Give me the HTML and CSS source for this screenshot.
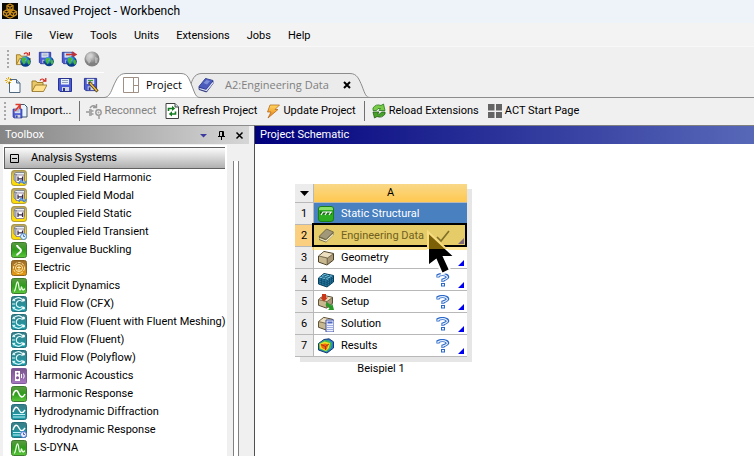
FILE: index.html
```html
<!DOCTYPE html>
<html lang="en">
<head>
<meta charset="utf-8">
<title>Unsaved Project - Workbench</title>
<link rel="stylesheet" href="styles.css">
</head>
<body>
<svg class="defs" aria-hidden="true">
  <defs>
    <linearGradient id="gy" x2="0" y2="1"><stop offset="0" stop-color="#a89a78"/><stop offset=".4" stop-color="#f2cf2c"/><stop offset="1" stop-color="#ffe000"/></linearGradient>
    <linearGradient id="gg" x2="0" y2="1"><stop offset="0" stop-color="#5c9a44"/><stop offset=".5" stop-color="#2f9c1c"/><stop offset="1" stop-color="#5cc83c"/></linearGradient>
    <linearGradient id="go" x2="0" y2="1"><stop offset="0" stop-color="#9a6c2c"/><stop offset="1" stop-color="#e89c10"/></linearGradient>
    <linearGradient id="gt" x2="0" y2="1"><stop offset="0" stop-color="#3c7c84"/><stop offset="1" stop-color="#18a0ac"/></linearGradient>
    <linearGradient id="gp" x2="0" y2="1"><stop offset="0" stop-color="#77558c"/><stop offset="1" stop-color="#a878c0"/></linearGradient>
    <radialGradient id="globe" cx=".4" cy=".3"><stop offset="0" stop-color="#a8e4ff"/><stop offset=".5" stop-color="#2c8cd8"/><stop offset="1" stop-color="#083c88"/></radialGradient>
    <radialGradient id="ball" cx=".4" cy=".3"><stop offset="0" stop-color="#e0e0e0"/><stop offset="1" stop-color="#808080"/></radialGradient>
    <linearGradient id="bolt" x2="0" y2="1"><stop offset="0" stop-color="#ffd860"/><stop offset="1" stop-color="#e87810"/></linearGradient>
    <linearGradient id="ptr" gradientUnits="userSpaceOnUse" x1="0" y1="0" x2="0" y2="46"><stop offset=".42" stop-color="#7c6008"/><stop offset=".42" stop-color="#000"/></linearGradient>
    <linearGradient id="ptredge" gradientUnits="userSpaceOnUse" x1="0" y1="0" x2="0" y2="46"><stop offset=".42" stop-color="#f8dc80"/><stop offset=".42" stop-color="#fff"/></linearGradient>

    <symbol id="i-logo" viewBox="0 0 16 16"><rect width="16" height="16" fill="#0c0a04"/><g fill="none" stroke="#c88c1c" stroke-width="1.3"><path d="M8 1l3 1.6v3L8 7.400 5 5.600v-3zM4.500 7l3 1.600v3L4.500 13.400l-3-1.800v-3zM11.500 7l3 1.600v3l-3 1.800-3-1.800v-3z"/><path d="M5 2.600l3 1.600 3-1.600M1.500 8.600l3 1.600 3-1.600M8.500 8.600l3 1.600 3-1.600M8 4.200V7M4.500 10v3M11.500 10v3M5 14l3 1 3-1"/></g></symbol>
    <symbol id="b-folder" viewBox="0 0 16 16"><path d="M1 14V4h4l1 1.500h6V8" fill="#e8c868" stroke="#a07c28"/><path d="M1 14.500L4.500 8h11.500l-3.500 6.500z" fill="#ffe08c" stroke="#8c6c20" stroke-width=".8"/><path d="M9 3.500c1-2 3.500-2 4.500 0M14.800 1v3.200h-3" fill="none" stroke="#d02018" stroke-width="1.2"/></symbol>
    <symbol id="b-disk" viewBox="0 0 16 16"><path d="M1.500 1.500h13v13H3l-1.500-1.500z" fill="#4c5cd4" stroke="#283490"/><path d="M4 2h8v5.500H4z" fill="#e8f0f8"/><path d="M5 3.500h6M5 5.500h6" stroke="#90a0b8"/><path d="M5 10h7v4H5z" fill="#d0d4dc"/><path d="M6 11h2v3H6z" fill="#283490"/></symbol>
    <symbol id="b-globe" viewBox="0 0 10 10"><circle cx="5" cy="5" r="4.800" fill="url(#globe)"/><path d="M1.500 2.500Q3 1 5 1.500L6 3 4.500 4 5 6 3.500 8 2 5zM7 3l2 1v3L7.500 8 6.500 5.500z" fill="#48b838"/></symbol>
    <symbol id="i-openweb" viewBox="0 0 16 16"><use href="#b-folder" width="16" height="15"/><use href="#b-globe" x="5" y="5" width="11" height="11"/></symbol>
    <symbol id="i-saveweb" viewBox="0 0 16 16"><use href="#b-disk" width="14" height="14"/><use href="#b-globe" x="6" y="5" width="10" height="11"/></symbol>
    <symbol id="i-sendweb" viewBox="0 0 16 16"><use href="#b-disk" width="14" height="14"/><path d="M5 3.500h9M11 1l4 2.500L11 6" stroke="#c83030" fill="none" stroke-width="1.400"/><use href="#b-globe" x="5" y="5" width="11" height="11"/></symbol>
    <symbol id="i-ball" viewBox="0 0 16 16"><circle cx="8" cy="8" r="7.500" fill="url(#ball)"/><path d="M3 4l4-2 2 2-3 3 1 3-2 3-3-5zM11 6l3 1-1 5-2 0z" fill="#d0d0d0" opacity=".6"/></symbol>
    <symbol id="i-new" viewBox="0 0 16 16"><path d="M4.500 2.500h7l3.500 3.500v9.500H4.500z" fill="#f8fcff" stroke="#506880"/><path d="M11.500 2.500V6H15" fill="#b8d0e8" stroke="#506880"/><path d="M3.500 0v7M0 3.500h7M1 1l5 5M6 1L1 6" stroke="#e8a800" stroke-width="1"/><circle cx="3.500" cy="3.500" r="1.300" fill="#fff"/></symbol>
    <symbol id="i-saveas" viewBox="0 0 16 16"><use href="#b-disk" width="15" height="15"/><path d="M6 5l8.500 9.500" stroke="#503c18" stroke-width="3"/><path d="M7 6l7 8" stroke="#f0c048" stroke-width="1.500"/><path d="M5 3.500h5" stroke="#38a038"/></symbol>
    <symbol id="i-import" viewBox="0 0 16 16"><path d="M8 1.500h4.500L15 4v10H8z" fill="#e8f4ff" stroke="#40586c"/><use href="#b-disk" y="5" width="11" height="11"/><path d="M3.500 1.500H8V6M3 8l5-6" stroke="#e03828" stroke-width="1.600" fill="none"/></symbol>
    <symbol id="i-reconnect" viewBox="0 0 16 16"><g fill="none" stroke="#989898" stroke-width="1.400"><path d="M4 5q3-4 6-1M10.500 1v3.500H7M0 9h3M3 7h2v5H3M5 8h2.500M5 11h2.500M13 13v3"/><circle cx="12.500" cy="9.500" r="2.700"/></g><path d="M3 6.500h2.500v6H3z" fill="#a8a8a8"/><circle cx="12.500" cy="9.500" r="1" fill="#a8a8a8"/></symbol>
    <symbol id="i-refresh" viewBox="0 0 16 16"><path d="M2 .5h9L14.500 4v11.500H2z" fill="#fff" stroke="#404040"/><path d="M11 .5V4h3.500" fill="#d0e8e8" stroke="#404040"/><path d="M4.500 8V5.500H9M11.500 8.500V11H7" stroke="#147c20" stroke-width="1.600" fill="none"/><path d="M8 2.800l3.200 2.700L8 8zM8 8.300v5.200L4.800 11z" fill="#147c20"/></symbol>
    <symbol id="i-bolt" viewBox="0 0 16 16"><path d="M5 2h9.500L10 6.500h3L3 15l3-6H2.500z" fill="url(#bolt)" stroke="#b06010" stroke-width=".7"/></symbol>
    <symbol id="i-reload" viewBox="0 0 16 16"><path d="M2 7.500V5q3-4.500 8-2.500l2.500-1.500L14 7.500H8l1.500-2q-3-1-4 2z" fill="#78cc48" stroke="#287818" stroke-width=".8"/><path d="M14 9v2q-3 4.500-8 2.500l-2.500 1.500L2 9h6l-1.500 2q3 1 4-2z" fill="#48a428" stroke="#205c14" stroke-width=".8"/></symbol>
    <symbol id="i-act" viewBox="0 0 16 16"><path d="M1 1h6.500v6.500H1zM9 1h6v6.500H9zM1 9h6.500v6H1zM9 9h6v6H9z" fill="#646464"/></symbol>
    <symbol id="i-layout" viewBox="0 0 16 16"><path d="M.5.5h15v15H.5zM10.500.5v15M10.500 8.500h5" fill="#fff" stroke="#a09084"/></symbol>
    <symbol id="i-book" viewBox="0 0 16 16"><path d="M1 9.500L7.500 1.500 15 3.500v3L8.500 15 1 12.500z" fill="#303c98" stroke="#20286c" stroke-width=".8"/><path d="M1.500 11.500L8.500 13.500l6.500-8" stroke="#e0e4f4" stroke-width="1.200" fill="none"/><path d="M1 9.500L7.500 1.500 15 3.500 8 12z" fill="#4c5cbc"/><path d="M5.500 6l3-3 3.500 1-3 3.500z" fill="#8090d8"/></symbol>
    <symbol id="i-graybook" viewBox="0 0 16 16"><path d="M1 8.500L8.500 1 15.500 4V7L8 14.500 1 12z" fill="#706848"/><path d="M1.500 10.500L8 13l7-6.500" stroke="#f4ecc8" stroke-width="1.200" fill="none"/><path d="M1 8.500L8.500 1 15.500 4 8 11.500z" fill="#a09878" stroke="#6c6444" stroke-width=".8"/></symbol>

    <symbol id="b-coupled" viewBox="0 0 16 16"><rect x=".5" y=".5" width="15" height="15" rx="2.500" fill="url(#gy)" stroke="#a48c28" stroke-width=".8"/><path d="M3 4l2-1.500h8.500V10L12 12" fill="#e8eef4" stroke="#707888" stroke-width=".8"/><path d="M3 4.500h2.500V12L3 10z" fill="#b8c4d0" stroke="#687080" stroke-width=".7"/><path d="M5 5h8v7.500H5z" fill="#fff" stroke="#807088" stroke-width=".8"/><path d="M7 6.500v4.500M11.500 6.500v4.500M7 8.800h4.500" stroke="#382c48" stroke-width="1.200"/></symbol>
    <symbol id="i-charm" viewBox="0 0 16 16"><use href="#b-coupled" width="16" height="16"/><path d="M8 14c1-4 2.500-4 4-1.500s2 0 3.500-1.500" stroke="#488ce0" stroke-width="1.500" fill="none"/></symbol>
    <symbol id="i-ctrans" viewBox="0 0 16 16"><use href="#b-coupled" width="16" height="16"/><circle cx="12.500" cy="12.500" r="3" fill="#e0f0ff" stroke="#488cd8"/><path d="M12.500 10.500v2H14" stroke="#2860b0" fill="none" stroke-width=".8"/></symbol>
    <symbol id="b-green" viewBox="0 0 16 16"><rect x=".5" y=".5" width="15" height="15" rx="2" fill="url(#gg)" stroke="#3c7c2c"/></symbol>
    <symbol id="i-eigen" viewBox="0 0 16 16"><use href="#b-green" width="16" height="16"/><path d="M6 3c0 3 4 3 4 5.500S6 11 6 13.500" stroke="#fff" stroke-width="2" fill="none"/></symbol>
    <symbol id="i-electric" viewBox="0 0 16 16"><rect x=".5" y=".5" width="15" height="15" rx="2" fill="url(#go)" stroke="#8c6420"/><g stroke="#ffe8a8" fill="none"><circle cx="8" cy="8" r="5.500" stroke-dasharray="3 1"/><circle cx="8" cy="8" r="3.500"/><path d="M6 7.500h4M8 5.500v4M6.500 10h3"/></g></symbol>
    <symbol id="i-explicit" viewBox="0 0 16 16"><use href="#b-green" width="16" height="16"/><path d="M3 13c2 0 2-9 3.500-9S7.500 12 9 12s1-3 1.500-3 .5 3 1.500 3 .500-1 2-1" stroke="#e8ffe0" stroke-width="1.300" fill="none"/></symbol>
    <symbol id="b-teal" viewBox="0 0 16 16"><rect x=".5" y=".5" width="15" height="15" rx="2" fill="url(#gt)" stroke="#24707c"/></symbol>
    <symbol id="i-fluid" viewBox="0 0 16 16"><use href="#b-teal" width="16" height="16"/><g fill="none" stroke="#d8f8fc" stroke-width="1.200"><path d="M11.500 5.800a3.500 3.500 0 1 0 0 4.400"/><path d="M1.500 5Q6 0 10 2.500l1.500 1M1.500 11Q6 16 10 13.500l1.500-1M1 8h3M2 3l2 2M2 13l2-2"/></g><circle cx="12.500" cy="4" r="1.500" fill="#fff"/><circle cx="12.500" cy="12" r="1.500" fill="#fff"/></symbol>
    <symbol id="i-acoustic" viewBox="0 0 16 16"><rect x=".5" y=".5" width="15" height="15" rx="1" fill="url(#gp)" stroke="#80589c"/><path d="M4 3h5v10H4z" fill="#fff"/><circle cx="6.500" cy="5.500" r="1" fill="#805098"/><circle cx="6.500" cy="9.800" r="1.500" fill="#805098"/><path d="M10.500 6v4M12.500 5.500q1.500 2.500 0 5" stroke="#fff" fill="none"/></symbol>
    <symbol id="i-harm" viewBox="0 0 16 16"><use href="#b-green" width="16" height="16"/><path d="M2 9.500C3 4 6 3 7.500 7s4 6 6.500 1" stroke="#fff" stroke-width="1.600" fill="none"/></symbol>
    <symbol id="i-hydro" viewBox="0 0 16 16"><use href="#b-teal" width="16" height="16"/><path d="M2 8C4 2 6 2 8 6s4 3 6 0" stroke="#fff" stroke-width="1.400" fill="none"/><path d="M2 10.500h12M2 13h12" stroke="#c0f0f8" stroke-width="1.200"/></symbol>
    <symbol id="i-hydror" viewBox="0 0 16 16"><use href="#i-hydro" width="16" height="16"/><circle cx="12.500" cy="12.500" r="3" fill="#e8f0ff" stroke="#5070d8"/><path d="M12.500 10.500v2H14" stroke="#2840b0" fill="none" stroke-width=".8"/></symbol>

    <symbol id="i-static" viewBox="0 0 16 16"><rect x=".5" y=".5" width="15" height="15" rx="2.500" fill="#2cac20" stroke="#1c7c18"/><path d="M1 3q0-2 2-2h10q2 0 2 2v1H1z" fill="#88e068"/><path d="M2 5.500h12v3H2z" fill="#186818"/><path d="M3 9l2-3h9M7 9l2-3M11 9l2-3" stroke="#fff" stroke-width="1.200" fill="none"/></symbol>
    <symbol id="i-geom" viewBox="0 0 16 16"><path d="M.5 6L6 1.500 15.500 3.500V10L9 15 .5 12z" fill="#a89878" stroke="#4c4028"/><path d="M1 6L6 2 15 4 9.500 8z" fill="#ece0c0"/><path d="M1 6.500L9 8.500V14.500L1 11.500z" fill="#c8b890"/><path d="M9.200 8v6.500M1 6l8.500 2L15 4" stroke="#64583c" stroke-width=".8" fill="none"/></symbol>
    <symbol id="i-model" viewBox="0 0 16 16"><path d="M.5 6L6 1.500 15.500 3.500V10L9 15 .5 12z" fill="#2878a0" stroke="#083c58"/><path d="M1 6L6 2 15 4 9.500 8z" fill="#80d0ec"/><path d="M1 8l8 2.500 6-4.500M1 10l8 2.500L15 8.500M3 4.500l8.500 2V13M4.800 3l8.700 2.200V12M3.500 6.500V13M6.200 7.200V14M3.500 6.500L9 2.500M6.500 7.200L12 3.200M9.200 8v6.500M1 6l8.500 2L15 4" stroke="#084868" stroke-width=".7" fill="none"/></symbol>
    <symbol id="i-setup" viewBox="0 0 16 16"><use href="#i-geom" width="15" height="15"/><path d="M4 0h4v3.500h2L6 7.500l-4-4h2z" fill="#c83818"/><path d="M9 8l4 3.500 1.500-1.500L16 16h-6l1.500-1.500L7.500 11z" fill="#289828"/></symbol>
    <symbol id="i-solution" viewBox="0 0 16 16"><use href="#i-geom" width="15" height="15"/><path d="M8 4h8v12H8z" fill="#eef2ff" stroke="#3c50a8"/><path d="M9.500 5.500h5v2h-5z" fill="#5068c0"/><path d="M9.500 9.500h5M9.500 11.500h5M9.500 13.500h5" stroke="#5068c0" stroke-dasharray="1 1"/></symbol>
    <symbol id="i-results" viewBox="0 0 16 16"><path d="M.5 5.500L6 1.500 11 .8l4.500 3V10L9 15 .5 12z" fill="#2878d8" stroke="#183c70"/><path d="M1 5.500L6.500 2 11 2.500l3 2.500-1 5-4.500 4L1 11z" fill="#38b858"/><path d="M1.500 6L6.500 3.500 12 5l-1 5L8 13l-6-2.500z" fill="#f0dc20"/><path d="M2.500 6.500L7 5.500l3.500 1-1.500 4-1 1.500-4-2z" fill="#f06810"/><path d="M3 6.500l4.500 2L11 6M7.500 8.500V12" stroke="#a02808" stroke-width=".8" fill="none"/></symbol>
    <symbol id="i-check" viewBox="0 0 14 14"><path d="M1 8l4 4 8-10" stroke="#807028" stroke-width="1.700" fill="none"/></symbol>
    <symbol id="i-question" viewBox="0 0 14 14"><path d="M2 4.500V2.500q5-2 8.500 0T7 7V9" stroke="#2c68c8" stroke-width="3.200" fill="none"/><path d="M2 4V2.700q5-2 8.300 0T7 7V8.500" stroke="#eaf4ff" stroke-width="1.200" fill="none"/><rect x="5.500" y="10.500" width="3" height="2.500" fill="#eaf4ff" stroke="#2c68c8"/></symbol>
  </defs>
</svg>

<div class="app">
  <header class="titlebar"><svg class="icon"><use href="#i-logo"/></svg><h1>Unsaved Project - Workbench</h1></header>
  <nav class="menubar">
    <button>File</button><button>View</button><button>Tools</button><button>Units</button><button>Extensions</button><button>Jobs</button><button>Help</button>
  </nav>
  <div class="toolbar repository">
    <span class="grip"></span>
    <button aria-label="Open from repository"><svg class="icon"><use href="#i-openweb"/></svg></button>
    <button aria-label="Save to repository"><svg class="icon"><use href="#i-saveweb"/></svg></button>
    <button aria-label="Send changes"><svg class="icon"><use href="#i-sendweb"/></svg></button>
    <button aria-label="Repository" disabled><svg class="icon"><use href="#i-ball"/></svg></button>
  </div>
  <div class="tabrow">
    <div class="files">
      <button aria-label="New"><svg class="icon"><use href="#i-new"/></svg></button>
      <button aria-label="Open"><svg class="icon"><use href="#b-folder"/></svg></button>
      <button aria-label="Save"><svg class="icon"><use href="#b-disk"/></svg></button>
      <button aria-label="Save as"><svg class="icon"><use href="#i-saveas"/></svg></button>
    </div>
    <div class="tabs">
      <div class="tab active">
        <svg class="shape" viewBox="0 0 96 26" preserveAspectRatio="none"><path d="M0 25.500C5 25.500 7 20 9 15C13 6 15 1.500 22 1.500H77C84 1.500 85 7 88 14C91 22 92 25.500 96 25.500"/></svg>
        <button class="label"><svg class="icon"><use href="#i-layout"/></svg>Project</button>
      </div>
      <div class="tab">
        <svg class="shape" viewBox="0 0 180 26" preserveAspectRatio="none"><path d="M1 12C3 5 6 1.500 12 1.500H160C167 1.500 169 7 172 14C175 22 176 25.500 180 25.500H8C5 25.500 4 20 1 12"/></svg>
        <button class="label"><svg class="icon"><use href="#i-book"/></svg>A2:Engineering Data</button>
        <button class="close" aria-label="Close tab"><svg viewBox="0 0 8 8"><path d="M1 1l6 6M7 1L1 7"/></svg></button>
      </div>
    </div>
  </div>
  <div class="toolbar commands">
    <span class="grip"></span>
    <button><svg class="icon"><use href="#i-import"/></svg>Import...</button>
    <span class="rule"></span>
    <button disabled><svg class="icon"><use href="#i-reconnect"/></svg>Reconnect</button>
    <button><svg class="icon"><use href="#i-refresh"/></svg>Refresh Project</button>
    <button><svg class="icon"><use href="#i-bolt"/></svg>Update Project</button>
    <span class="rule"></span>
    <button><svg class="icon"><use href="#i-reload"/></svg>Reload Extensions</button>
    <button><svg class="icon"><use href="#i-act"/></svg>ACT Start Page</button>
  </div>
  <main class="workspace">
    <aside class="toolbox">
      <div class="panelhead">
        <h2>Toolbox</h2>
        <button aria-label="Panel menu"><svg viewBox="0 0 9 9"><path d="M1 3h7L4.500 6.500z" fill="#3c3ca0"/></svg></button>
        <button aria-label="Pin panel"><svg viewBox="0 0 9 9"><path d="M2.500 5V.5h4V5M1 5.500h7M4.500 5.500V9M5.500 1v4" fill="none" stroke="#000"/></svg></button>
        <button aria-label="Close panel"><svg viewBox="0 0 9 9"><path d="M1.500 1.500l6 6M7.500 1.500l-6 6" stroke="#000" stroke-width="1.500"/></svg></button>
      </div>
      <div class="toolbody">
        <div class="tree">
          <button class="category"><svg viewBox="0 0 9 9"><path d="M.5.5h8v8h-8zM2 4.500h5" fill="none" stroke="#000"/></svg>Analysis Systems</button>
          <ul>
            <li><svg class="icon"><use href="#i-charm"/></svg>Coupled Field Harmonic</li>
            <li><svg class="icon"><use href="#i-charm"/></svg>Coupled Field Modal</li>
            <li><svg class="icon"><use href="#b-coupled"/></svg>Coupled Field Static</li>
            <li><svg class="icon"><use href="#i-ctrans"/></svg>Coupled Field Transient</li>
            <li><svg class="icon"><use href="#i-eigen"/></svg>Eigenvalue Buckling</li>
            <li><svg class="icon"><use href="#i-electric"/></svg>Electric</li>
            <li><svg class="icon"><use href="#i-explicit"/></svg>Explicit Dynamics</li>
            <li><svg class="icon"><use href="#i-fluid"/></svg>Fluid Flow (CFX)</li>
            <li><svg class="icon"><use href="#i-fluid"/></svg>Fluid Flow (Fluent with Fluent Meshing)</li>
            <li><svg class="icon"><use href="#i-fluid"/></svg>Fluid Flow (Fluent)</li>
            <li><svg class="icon"><use href="#i-fluid"/></svg>Fluid Flow (Polyflow)</li>
            <li><svg class="icon"><use href="#i-acoustic"/></svg>Harmonic Acoustics</li>
            <li><svg class="icon"><use href="#i-harm"/></svg>Harmonic Response</li>
            <li><svg class="icon"><use href="#i-hydro"/></svg>Hydrodynamic Diffraction</li>
            <li><svg class="icon"><use href="#i-hydror"/></svg>Hydrodynamic Response</li>
            <li><svg class="icon"><use href="#i-explicit"/></svg>LS-DYNA</li>
          </ul>
        </div>
        <div class="scroll"><span class="thumb"></span></div>
      </div>
    </aside>
    <section class="schematic">
      <h2>Project Schematic</h2>
      <div class="canvas">
        <figure class="system">
          <table>
            <thead><tr><th class="corner"><svg viewBox="0 0 9 5"><path d="M0 0h9L4.500 5z"/></svg></th><th class="colhead">A</th></tr></thead>
            <tbody>
              <tr class="title"><th>1</th><td><div class="cell"><svg class="icon"><use href="#i-static"/></svg>Static Structural</div></td></tr>
              <tr class="selected"><th>2</th><td><div class="cell"><svg class="icon"><use href="#i-graybook"/></svg>Engineering Data<svg class="state"><use href="#i-check"/></svg></div>
                <svg class="pointer" viewBox="0 0 30 46"><path d="M2 2V36L10 30L16 44L24 40L18 27H29Z"/></svg></td></tr>
              <tr><th>3</th><td><div class="cell"><svg class="icon"><use href="#i-geom"/></svg>Geometry</div></td></tr>
              <tr><th>4</th><td><div class="cell"><svg class="icon"><use href="#i-model"/></svg>Model<svg class="state"><use href="#i-question"/></svg></div></td></tr>
              <tr><th>5</th><td><div class="cell"><svg class="icon"><use href="#i-setup"/></svg>Setup<svg class="state"><use href="#i-question"/></svg></div></td></tr>
              <tr><th>6</th><td><div class="cell"><svg class="icon"><use href="#i-solution"/></svg>Solution<svg class="state"><use href="#i-question"/></svg></div></td></tr>
              <tr><th>7</th><td><div class="cell"><svg class="icon"><use href="#i-results"/></svg>Results<svg class="state"><use href="#i-question"/></svg></div></td></tr>
            </tbody>
          </table>
          <figcaption>Beispiel 1</figcaption>
        </figure>
      </div>
    </section>
  </main>
</div>
</body>
</html>
```

FILE: styles.css
```css
* { box-sizing: border-box; }
body {
  margin: 0;
  background: #f0f0f0;
  color: #000;
  font: 11px/18px Roboto, "Open Sans", sans-serif;
}
h1, h2, ul, figure { margin: 0; padding: 0; font-size: inherit; font-weight: normal; }
button {
  display: flex;
  align-items: center;
  margin: 0;
  padding: 0;
  border: 0;
  background: none;
  color: inherit;
  font: inherit;
  white-space: nowrap;
}
svg { display: block; flex: none; }
.defs { position: absolute; width: 0; height: 0; }
.icon { width: 16px; height: 16px; }

.app { display: flex; flex-direction: column; height: 100vh; overflow: hidden; }
.titlebar { display: flex; align-items: center; gap: 6px; padding: 1px 2px 2px; background: #edf3f9; }
.titlebar h1 { font-size: 12px; line-height: 20px; }
.menubar { display: flex; gap: 17px; padding: 4px 15px 1px; background: #f3f3f3; border-bottom: 1px solid #f8f8f8; }

.toolbar { display: flex; align-items: center; }
.grip {
  width: 2px;
  height: 18px;
  background: repeating-linear-gradient(#a8a8a8 0 2px, transparent 2px 4px);
}
.repository { gap: 7px; padding: 3px 7px; }
.repository .grip { margin-right: -1px; }

.tabrow { display: flex; padding-top: 1px; border-bottom: 1px solid #8c8c8c; font-family: "Open Sans", sans-serif; }
.files { display: flex; align-items: center; gap: 10px; padding: 0 5px; width: 104px; border-top: 1px solid #fff; }
.tabs { display: flex; }
.tab { position: relative; display: flex; align-items: center; height: 26px; margin-bottom: -1px; color: #808080; }
.tab .shape { position: absolute; left: 0; top: 0; width: 100%; height: 100%; fill: #ebebeb; stroke: #8c8c8c; }
.tab .label { position: relative; gap: 7px; }
.tab + .tab { width: 180px; margin-left: -10px; padding: 0 19px 0 8px; justify-content: space-between; }
.tab + .tab .label { gap: 11px; }
.tab.active { z-index: 1; width: 96px; padding-left: 19px; color: #000; }
.tab.active .shape { fill: #fff; }
.close { position: relative; }
.close svg { width: 8px; height: 8px; stroke: #000; stroke-width: 2px; }

.commands { gap: 8px; padding: 3px 4px 4px; }
.commands button { gap: 2px; }
.commands .grip { margin-right: -2px; }
.commands button:disabled { color: #808080; }
.rule { width: 1px; height: 20px; margin-right: -2px; background: #707070; }

.workspace { display: flex; flex: 1; min-height: 0; }
.toolbox { display: flex; flex-direction: column; flex: none; width: 255px; border-top: 1px solid #8c8c8c; border-right: 1px solid #505050; }
.panelhead {
  display: flex;
  align-items: center;
  gap: 9px;
  margin-right: 5px;
  padding: 0 5px;
  background: linear-gradient(90deg, #858585, #d6d6d6);
  color: #fff;
}
.panelhead h2 { flex: 1; }
.panelhead svg { width: 9px; height: 9px; }
.toolbody { display: flex; flex: 1; min-height: 0; padding: 1px 5px 0 3px; }
.tree { flex: 1; min-width: 0; padding: 2px 2px 0 1px; background: #fff; overflow: hidden; }
.category {
  width: 100%;
  gap: 12px;
  padding: 1px 5px;
  border: 1px solid #606060;
  border-width: 1px 0 1px 1px;
  background: linear-gradient(#fbfbfb, #b0b0b0);
}
.category svg { width: 9px; height: 9px; }
.tree ul { list-style: none; }
.tree li { display: flex; align-items: center; gap: 7px; padding-left: 7px; white-space: nowrap; }
.scroll { width: 22px; padding: 16px 0 0 6px; }
.thumb { display: block; width: 6px; height: 100%; border: 1px solid #808080; border-width: 0 1px; background: #fff; }

.schematic { display: flex; flex-direction: column; flex: 1; min-width: 0; background: #fff; border-top: 1px solid #808080; }
.schematic h2 { padding: 0 5px; background: linear-gradient(90deg, #00007c, #5868b8); color: #fff; }
.canvas { padding: 40px; }
.system { width: max-content; text-align: center; }
.system table { border-collapse: separate; border-spacing: 0; box-shadow: 5px 5px #e6e6e6; background: #fff; }
.system th { width: 19px; height: 22px; padding: 0; border: solid #b8b8b8; border-width: 0 1px 1px 0; background: #ececec; font-weight: normal; line-height: 16px; }
.system .corner { height: 19px; }
.corner svg { width: 9px; height: 5px; margin: 0 auto; }
.system .colhead { height: 19px; width: 153px; border-right: 0; background: linear-gradient(#f8d888, #ffc850); }
.system td { position: relative; height: 22px; padding: 0; border-bottom: 1px solid #b8b8b8; }
.cell { display: flex; align-items: center; gap: 7px; padding: 0 17px 0 4px; white-space: nowrap; }
.state { width: 14px; height: 14px; margin-left: auto; }
tr:not(.title) > td::after {
  content: "";
  position: absolute;
  right: 3px;
  bottom: 2px;
  border: 3px solid;
  border-color: transparent #0000f0 #0000f0 transparent;
}
.system .title td { background: #4880c0; color: #fff; }
.system .selected th { background: #fad080; }
.system .selected td { background: #e6cc68; color: #706020; }
.system .selected td::before { content: ""; position: absolute; z-index: 1; inset: -2px 0 -1px -2px; border: 2px solid #000; box-shadow: 0 3px rgba(255, 216, 90, .6); }
.system .selected td::after { border-color: transparent #806878 #806878 transparent; }
.pointer { position: absolute; z-index: 2; left: 112px; top: 5px; width: 30px; height: 46px; fill: url(#ptr); stroke: url(#ptredge); stroke-width: 2px; }
.system figcaption { padding-top: 3px; }
```
